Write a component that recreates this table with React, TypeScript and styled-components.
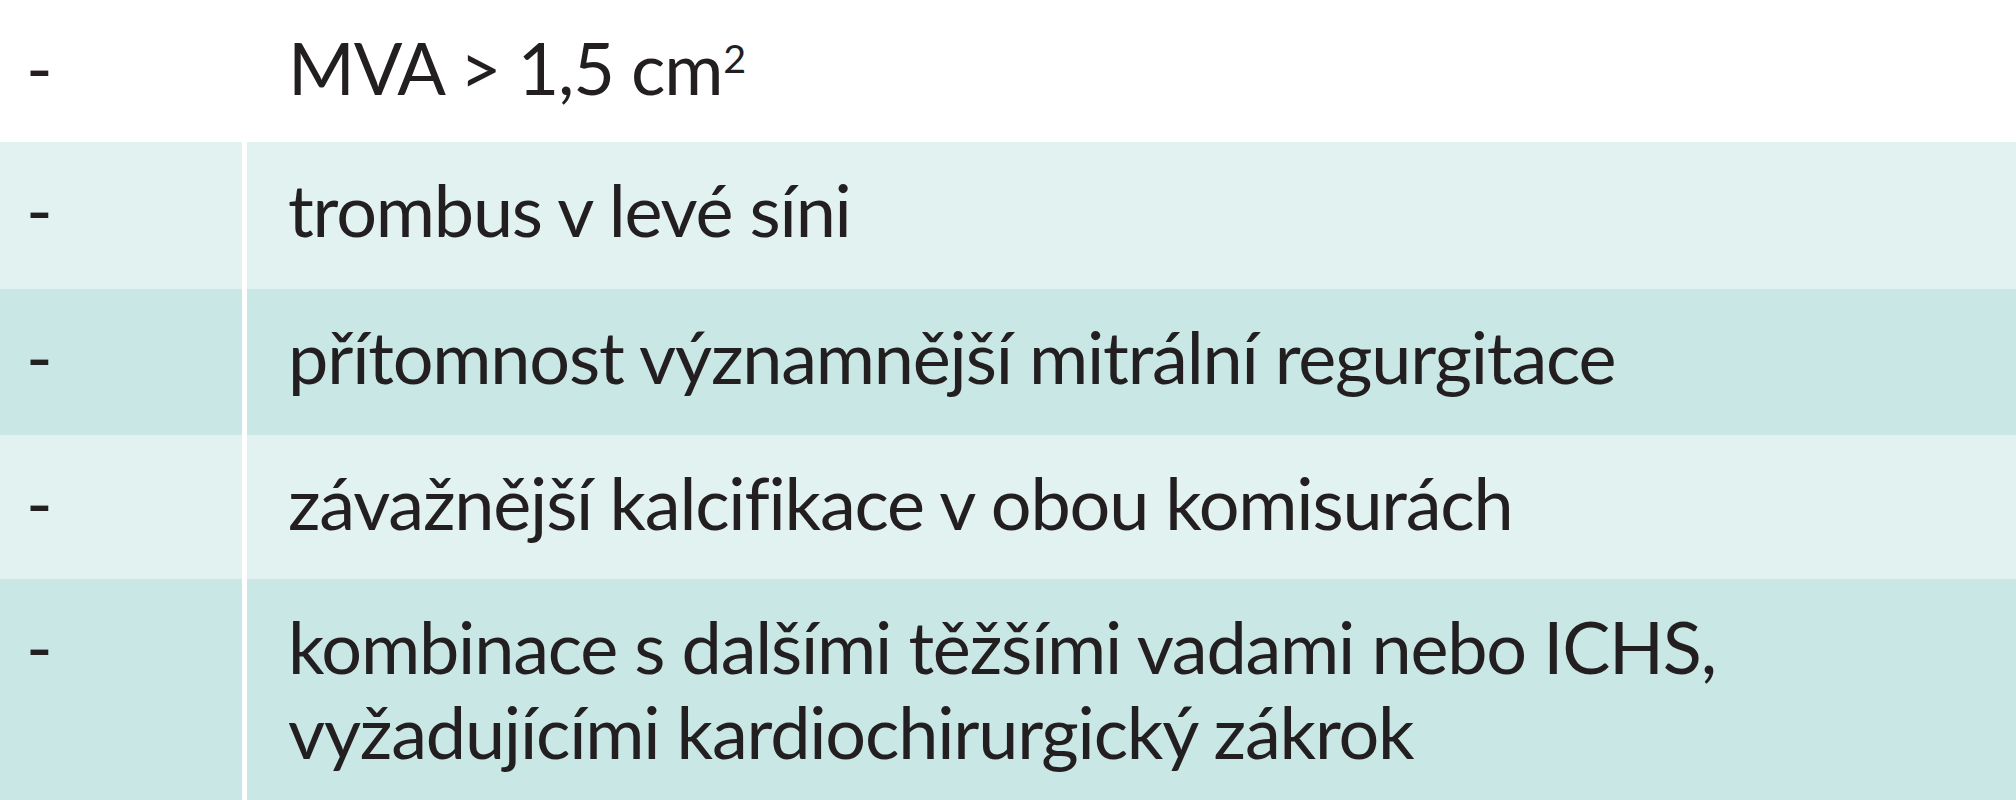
import styled, { createGlobalStyle } from "styled-components";

const GlobalStyle = createGlobalStyle`
  html, body {
    margin: 0;
    padding: 0;
    background: #ffffff;
  }
  body {
    font-family: Lato, "Open Sans", "Noto Sans", sans-serif;
    color: #231f20;
  }
`;

type Tone = "white" | "light" | "dark";

const TONES: Record<Tone, string> = {
  white: "#ffffff",
  light: "#e2f2f1",
  dark: "#c9e7e5",
};

const S = {
  Table: styled.div`
    display: grid;
    grid-template-columns: 242px 1fr;
    column-gap: 5px;
    width: 2016px;
    background: #ffffff;
    overflow: hidden;
  `,
  Cell: styled.div<{ $tone: Tone; $height: number }>`
    background: ${({ $tone }) => TONES[$tone]};
    min-height: ${({ $height }) => $height}px;
    box-sizing: border-box;
    padding: 25px 0 30px;
    font-size: 72px;
    line-height: 85px;
    letter-spacing: -1.2px;
    white-space: nowrap;
  `,
  Dash: styled.span`
    display: block;
    padding-left: 26px;
  `,
  Text: styled.span`
    display: block;
    padding-left: 41px;
  `,
  Sup: styled.sup`
    font-size: 0.55em;
    line-height: 0;
    vertical-align: 0.55em;
    margin-left: 1px;
  `,
};

interface Row {
  tone: Tone;
  height: number;
  lines: React.ReactNode[];
}

const rows: Row[] = [
  {
    tone: "white",
    height: 142,
    lines: [
      <>
        MVA &gt; 1,5 cm<S.Sup>2</S.Sup>
      </>,
    ],
  },
  { tone: "light", height: 147, lines: ["trombus v levé síni"] },
  {
    tone: "dark",
    height: 146,
    lines: ["přítomnost významnější mitrální regurgitace"],
  },
  {
    tone: "light",
    height: 144,
    lines: ["závažnější kalcifikace v obou komisurách"],
  },
  {
    tone: "dark",
    height: 240,
    lines: [
      "kombinace s dalšími těžšími vadami nebo ICHS,",
      "vyžadujícími kardiochirurgický zákrok",
    ],
  },
];

const App = () => {
  return (
    <>
      <GlobalStyle />
      <S.Table>
        {rows.map((row, i) => (
          <>
            <S.Cell key={`d${i}`} $tone={row.tone} $height={row.height}>
              <S.Dash>-</S.Dash>
            </S.Cell>
            <S.Cell key={`t${i}`} $tone={row.tone} $height={row.height}>
              {row.lines.map((line, j) => (
                <S.Text key={j}>{line}</S.Text>
              ))}
            </S.Cell>
          </>
        ))}
      </S.Table>
    </>
  );
};

export default App;
